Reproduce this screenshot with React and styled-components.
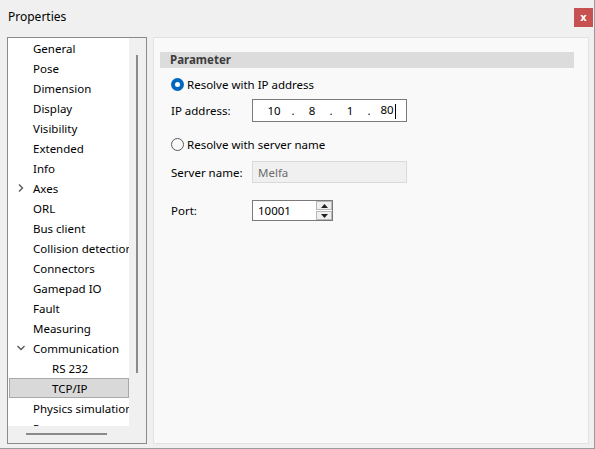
import styled, { createGlobalStyle } from "styled-components"

const GlobalStyle = createGlobalStyle`
  html, body {
    margin: 0;
    padding: 0;
    background: #f0f0f0;
  }
  * {
    box-sizing: border-box;
  }
`

const Window = styled.div`
  width: 595px;
  height: 449px;
  background: #f0f0f0;
  border-right: 1px solid #9a9a9a;
  border-bottom: 1px solid #9a9a9a;
  display: flex;
  flex-direction: column;
  font-family: "Noto Sans", "Open Sans", sans-serif;
  font-size: 11.5px;
  color: #000;
  overflow: hidden;
`

const TitleBar = styled.div`
  height: 34px;
  display: flex;
  align-items: center;
  justify-content: space-between;
  padding: 0 1px 0 8px;
`

const Title = styled.span`
  font-size: 12px;
  margin-top: -2px;
`

const CloseButton = styled.button`
  width: 19px;
  height: 19px;
  border: none;
  padding: 0;
  background: #c75050;
  color: #fff;
  font-family: "DejaVu Sans", sans-serif;
  font-weight: bold;
  font-size: 10px;
  line-height: 19px;
  display: flex;
  align-items: center;
  justify-content: center;
`

const Body = styled.div`
  flex: 1;
  display: flex;
  gap: 6px;
  padding: 3px 5px 4px 7px;
`

/* ---------- navigation tree ---------- */

const TreePanel = styled.div`
  width: 140px;
  height: 407px;
  border: 1px solid #8a8a8a;
  display: grid;
  grid-template-columns: 121px 17px;
  grid-template-rows: 388px 17px;
  background: #fff;
`

const TreeList = styled.div`
  overflow: hidden;
  background: #fff;
`

const TreeRow = styled.div`
  height: 20px;
  display: flex;
  align-items: center;
  padding-left: ${(p) => (p.$level - 1) * 19}px;
  white-space: nowrap;
  background: ${(p) => (p.$selected ? "#d9d9d9" : "transparent")};
  border: 1px solid ${(p) => (p.$selected ? "#a8a8a8" : "transparent")};
  margin-left: ${(p) => (p.$selected ? "1px" : "0")};
`

const Twisty = styled.span`
  width: 24px;
  flex: none;
  display: flex;
  align-items: center;
  justify-content: center;
  margin-left: ${(p) => (p.$selected ? "-1px" : "0")};
`

const VScroll = styled.div`
  background: #f0f0f0;
  padding: 17px 0 0 7px;
`

const VThumb = styled.div`
  width: 2px;
  height: 318px;
  background: #8a8a8a;
`

const HScroll = styled.div`
  background: #f0f0f0;
  padding: 7px 0 0 18px;
`

const HThumb = styled.div`
  width: 81px;
  height: 2px;
  background: #8a8a8a;
`

const Corner = styled.div`
  background: #f0f0f0;
`

/* ---------- parameter page ---------- */

const PagePanel = styled.div`
  width: 436px;
  height: 407px;
  background: #f9f9f9;
  border: 1px solid #e2e2e2;
  padding: 14px 14px 0 6px;
`

const SectionHeader = styled.div`
  height: 16px;
  background: #dcdcdc;
  padding-left: 10px;
  font-weight: bold;
  color: #3c3c3c;
  line-height: 16px;
`

const Fields = styled.div`
  padding-left: 11px;
  display: flex;
  flex-direction: column;
`

const RadioRow = styled.label`
  height: 17px;
  margin-top: ${(p) => p.$gap}px;
  display: flex;
  align-items: center;
  gap: 3px;
`

const RadioMark = styled.span`
  width: 13px;
  height: 13px;
  border-radius: 50%;
  flex: none;
  border: ${(p) => (p.$checked ? "none" : "1px solid #5a5a5a")};
  background: ${(p) => (p.$checked ? "#0067c0" : "#f9f9f9")};
  display: flex;
  align-items: center;
  justify-content: center;

  &::after {
    content: "";
    display: ${(p) => (p.$checked ? "block" : "none")};
    width: 5px;
    height: 5px;
    border-radius: 50%;
    background: #fff;
  }
`

const FieldRow = styled.div`
  height: ${(p) => p.$height}px;
  margin-top: ${(p) => p.$gap}px;
  display: flex;
  align-items: center;
`

const FieldLabel = styled.span`
  width: 81px;
  flex: none;
`

const IpBox = styled.div`
  width: 155px;
  height: 100%;
  background: #fff;
  border: 1px solid #7a7a7a;
  display: flex;
  align-items: center;
  padding-left: 5px;
`

const Octet = styled.span`
  width: 32px;
  text-align: center;
`

const Dot = styled.span`
  width: 6px;
  text-align: center;
`

const Caret = styled.span`
  display: inline-block;
  width: 1px;
  height: 15px;
  background: #000;
  vertical-align: middle;
  margin-left: 1px;
`

const TextBox = styled.div`
  width: 155px;
  height: 100%;
  background: ${(p) => (p.$disabled ? "#f0f0f0" : "#fff")};
  border: 1px solid ${(p) => (p.$disabled ? "#dadada" : "#7a7a7a")};
  color: ${(p) => (p.$disabled ? "#6d6d6d" : "#000")};
  display: flex;
  align-items: center;
  padding-left: 5px;
`

const SpinBox = styled.div`
  width: 81px;
  height: 100%;
  display: flex;
  background: #fff;
  border: 1px solid #7a7a7a;
`

const SpinText = styled.div`
  flex: 1;
  display: flex;
  align-items: center;
  padding-left: 5px;
`

const SpinButtons = styled.div`
  width: 17px;
  display: flex;
  flex-direction: column;
  gap: 1px;
  padding: 0 0 0 1px;
`

const SpinButton = styled.div`
  flex: 1;
  background: #f0f0f0;
  border: 1px solid #b8b8b8;
  display: flex;
  align-items: center;
  justify-content: center;
`

const Chevron = ({ dir }) => (
  <svg width="10" height="10" viewBox="0 0 10 10">
    <polyline
      points={dir === "down" ? "1.5,3 5,6.5 8.5,3" : "3,1.5 6.5,5 3,8.5"}
      fill="none"
      stroke="#555"
      strokeWidth="1.3"
    />
  </svg>
)

const Arrow = ({ up }) => (
  <svg width="7" height="4" viewBox="0 0 7 4">
    <polygon points={up ? "0,4 7,4 3.5,0" : "0,0 7,0 3.5,4"} fill="#222" />
  </svg>
)

const treeItems = [
  { label: "General", level: 1 },
  { label: "Pose", level: 1 },
  { label: "Dimension", level: 1 },
  { label: "Display", level: 1 },
  { label: "Visibility", level: 1 },
  { label: "Extended", level: 1 },
  { label: "Info", level: 1 },
  { label: "Axes", level: 1, expander: "right" },
  { label: "ORL", level: 1 },
  { label: "Bus client", level: 1 },
  { label: "Collision detection", level: 1 },
  { label: "Connectors", level: 1 },
  { label: "Gamepad IO", level: 1 },
  { label: "Fault", level: 1 },
  { label: "Measuring", level: 1 },
  { label: "Communication", level: 1, expander: "down" },
  { label: "RS 232", level: 2 },
  { label: "TCP/IP", level: 2, selected: true },
  { label: "Physics simulation", level: 1 },
  { label: "Program", level: 1 },
]

export default function App() {
  return (
    <>
      <GlobalStyle />
      <Window>
        <TitleBar>
          <Title>Properties</Title>
          <CloseButton>x</CloseButton>
        </TitleBar>

        <Body>
          <TreePanel>
            <TreeList>
              {treeItems.map((item) => (
                <TreeRow key={item.label} $level={item.level} $selected={item.selected}>
                  <Twisty $selected={item.selected}>
                    {item.expander && <Chevron dir={item.expander} />}
                  </Twisty>
                  {item.label}
                </TreeRow>
              ))}
            </TreeList>
            <VScroll>
              <VThumb />
            </VScroll>
            <HScroll>
              <HThumb />
            </HScroll>
            <Corner />
          </TreePanel>

          <PagePanel>
            <SectionHeader>Parameter</SectionHeader>
            <Fields>
              <RadioRow $gap={8}>
                <RadioMark $checked />
                Resolve with IP address
              </RadioRow>
              <FieldRow $height={23} $gap={6}>
                <FieldLabel>IP address:</FieldLabel>
                <IpBox>
                  <Octet>10</Octet>
                  <Dot>.</Dot>
                  <Octet>8</Octet>
                  <Dot>.</Dot>
                  <Octet>1</Octet>
                  <Dot>.</Dot>
                  <Octet>
                    80
                    <Caret />
                  </Octet>
                </IpBox>
              </FieldRow>

              <RadioRow $gap={14}>
                <RadioMark />
                Resolve with server name
              </RadioRow>
              <FieldRow $height={22} $gap={8}>
                <FieldLabel>Server name:</FieldLabel>
                <TextBox $disabled>Melfa</TextBox>
              </FieldRow>

              <FieldRow $height={21} $gap={17}>
                <FieldLabel>Port:</FieldLabel>
                <SpinBox>
                  <SpinText>10001</SpinText>
                  <SpinButtons>
                    <SpinButton>
                      <Arrow up />
                    </SpinButton>
                    <SpinButton>
                      <Arrow />
                    </SpinButton>
                  </SpinButtons>
                </SpinBox>
              </FieldRow>
            </Fields>
          </PagePanel>
        </Body>
      </Window>
    </>
  )
}
